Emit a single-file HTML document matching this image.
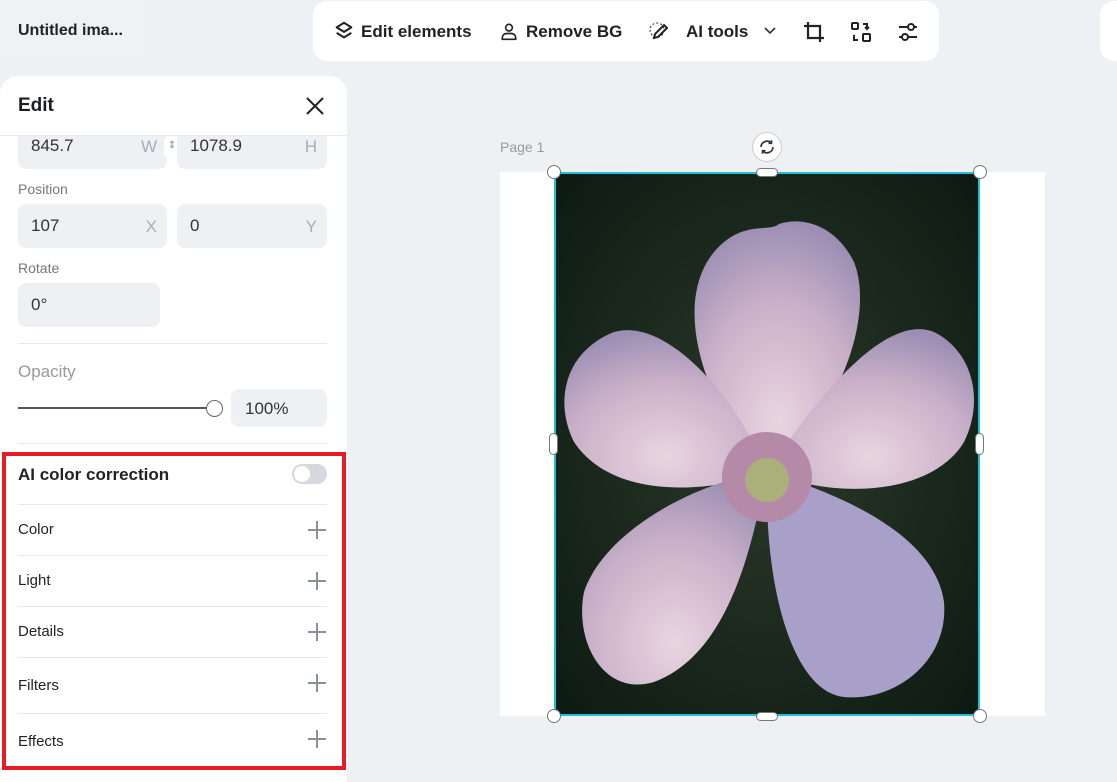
<!DOCTYPE html>
<html><head><meta charset="utf-8"><style>
*{box-sizing:border-box;margin:0;padding:0}
body{width:1117px;height:782px;background:#eef1f4;font-family:"Liberation Sans",sans-serif;position:relative;overflow:hidden;color:#1b1d22}
.abs{position:absolute}
.title{left:0;top:0;width:150px;height:60px;background:#eff2f5;border-radius:0 0 14px 0;font-size:16px;font-weight:bold;padding:22px 18px;color:#222;white-space:nowrap}
.tb{left:313px;top:1px;width:626px;height:60px;background:#fff;border-radius:14px}
.tb span{position:absolute;top:21px;font-size:17px;font-weight:bold;color:#222}
.panel{left:0;top:76px;width:347px;height:706px;background:#fff;border-radius:18px 18px 0 0}
.inp{position:absolute;background:#eef1f4;border-radius:8px;height:44px;font-size:17px;padding:12px 13px;color:#333}
.inp i{position:absolute;right:10px;top:13px;font-style:normal;color:#a4adb8}
.lbl{position:absolute;left:18px;font-size:14px;color:#777}
.hr{position:absolute;left:18px;width:309px;height:1px;background:#e6e8eb}
.row{position:absolute;left:18px;font-size:15px;color:#222}
.plus{position:absolute;left:308px;width:18px;height:18px}
.plus:before{content:"";position:absolute;left:8px;top:0;width:1.5px;height:18px;background:#8a919a}
.plus:after{content:"";position:absolute;left:0;top:8px;width:18px;height:1.5px;background:#8a919a}
.h{position:absolute;width:14px;height:14px;border-radius:50%;background:#fff;border:1.5px solid #777}
</style></head><body>
<div class="abs title">Untitled ima...</div>
<div class="abs tb">
<svg class="abs" style="left:20px;top:19px" width="22" height="22" viewBox="0 0 24 24" fill="none" stroke="#222" stroke-width="2.2" stroke-linejoin="round"><path d="M12 3l8 5-8 5-8-5z"/><path d="M4 14l8 5 8-5"/></svg>
<span style="left:48px">Edit elements</span>
<svg class="abs" style="left:186px;top:20px" width="20" height="20" viewBox="0 0 24 24" fill="none" stroke="#222" stroke-width="2"><circle cx="12" cy="8" r="4"/><path d="M4 22v-2a5 5 0 0 1 5-5h6a5 5 0 0 1 5 5v2z"/></svg>
<span style="left:213px">Remove BG</span>
<svg class="abs" style="left:334px;top:19px" width="24" height="24" viewBox="0 0 24 24" fill="none" stroke="#222" stroke-width="2"><path d="M17 5l3 3-9 9-4 1 1-4z"/><circle cx="10" cy="10" r="7" stroke-dasharray="2 2" stroke-width="1"/></svg>
<span style="left:373px">AI tools</span>
<svg class="abs" style="left:450px;top:25px" width="14" height="10" viewBox="0 0 14 10" fill="none" stroke="#333" stroke-width="1.6"><path d="M2 2l5 5 5-5"/></svg>
<svg class="abs" style="left:489px;top:19px" width="24" height="24" viewBox="0 0 24 24" fill="none" stroke="#222" stroke-width="2.2"><path d="M6 2v16h16M2 6h16v16"/></svg>
<svg class="abs" style="left:536px;top:19px" width="24" height="24" viewBox="0 0 24 24" fill="none" stroke="#222" stroke-width="2"><rect x="3" y="3" width="6" height="6" rx="1"/><rect x="14" y="14" width="7" height="7" rx="1"/><path d="M14 4h4v5M16 7l2 2 2-2M9 20H5v-5"/></svg>
<svg class="abs" style="left:583px;top:19px" width="24" height="24" viewBox="0 0 24 24" fill="none" stroke="#222" stroke-width="2"><path d="M3 7h9M18 7h3M3 17h3M12 17h9"/><circle cx="15" cy="7" r="3"/><circle cx="9" cy="17" r="3"/></svg>
</div>
<div class="abs" style="left:1100px;top:1px;width:30px;height:60px;background:#fff;border-radius:14px"></div>

<div class="abs panel">
<div class="inp" style="left:18px;top:60px;width:149px;height:33px;border-radius:0 0 8px 8px;padding-top:0">845.7<i style="top:1px">W</i></div>
<div class="abs" style="left:164px;top:61px;width:16px;height:20px;background:#fff;border-radius:4px;font-size:10px;text-align:center;color:#888;padding-top:3px">⇕</div>
<div class="inp" style="left:177px;top:60px;width:150px;height:33px;border-radius:0 0 8px 8px;padding-top:0">1078.9<i style="top:1px">H</i></div>
<div style="position:absolute;left:18px;top:19px;font-size:19px;font-weight:bold">Edit</div>
<svg style="position:absolute;left:305px;top:20px" width="20" height="20" viewBox="0 0 20 20" stroke="#222" stroke-width="2"><path d="M2 2l16 16M18 2L2 18"/></svg>
<div class="hr" style="left:0;width:347px;top:59px"></div>
<div class="lbl" style="top:105px">Position</div>
<div class="inp" style="left:18px;top:128px;width:149px">107<i>X</i></div>
<div class="inp" style="left:177px;top:128px;width:150px">0<i>Y</i></div>
<div class="lbl" style="top:184px">Rotate</div>
<div class="inp" style="left:18px;top:207px;width:142px">0°</div>
<div class="hr" style="top:267px"></div>
<div class="lbl" style="top:286px;font-size:17px;color:#999">Opacity</div>
<div class="abs" style="left:18px;top:331px;width:197px;height:2px;background:#555"></div>
<div class="abs" style="left:206px;top:324px;width:17px;height:17px;border-radius:50%;background:#fff;border:1px solid #666"></div>
<div class="inp" style="left:231px;top:313px;width:96px;height:38px;padding:10px 14px">100%</div>
<div class="hr" style="top:367px"></div>
</div>
<div class="abs" style="left:2px;top:452px;width:344px;height:318px;border:4px solid #e51c23"></div>
<div class="abs" style="left:18px;top:465px;font-size:17px;font-weight:bold;color:#222">AI color correction</div>
<div class="abs" style="left:292px;top:464px;width:35px;height:20px;border-radius:10px;background:#d5d9de"><div style="position:absolute;left:2px;top:2px;width:16px;height:16px;border-radius:50%;background:#fff"></div></div>
<div class="hr" style="top:504px"></div>
<div class="row" style="top:521px">Color</div><div class="plus" style="top:521px"></div>
<div class="hr" style="top:555px"></div>
<div class="row" style="top:572px">Light</div><div class="plus" style="top:572px"></div>
<div class="hr" style="top:606px"></div>
<div class="row" style="top:623px">Details</div><div class="plus" style="top:623px"></div>
<div class="hr" style="top:657px"></div>
<div class="row" style="top:677px">Filters</div><div class="plus" style="top:674px"></div>
<div class="hr" style="top:713px"></div>
<div class="row" style="top:733px">Effects</div><div class="plus" style="top:730px"></div>

<div class="abs" style="left:500px;top:139px;font-size:14px;color:#999">Page 1</div>
<div class="abs" style="left:500px;top:172px;width:545px;height:544px;background:#fff"></div>
<svg class="abs" style="left:554px;top:172px" width="426" height="544" viewBox="0 0 426 544">
<defs><radialGradient id="bg" cx="50%" cy="50%" r="70%"><stop offset="0" stop-color="#2c3a2a"/><stop offset="1" stop-color="#0d1a12"/></radialGradient>
<radialGradient id="pt" cx="50%" cy="80%" r="80%"><stop offset="0" stop-color="#e9d5e0"/><stop offset="0.6" stop-color="#c9b0c8"/><stop offset="1" stop-color="#9c8eb4"/></radialGradient></defs>
<rect width="426" height="544" fill="url(#bg)"/>
<g fill="url(#pt)">
<path d="M215 300 C150 240 110 120 170 70 C195 50 215 60 225 52 C245 45 280 50 300 90 C320 140 290 240 215 300Z"/>
<path d="M213 300 C160 320 60 330 20 270 C0 230 10 180 60 160 C110 145 180 220 213 300Z"/>
<path d="M213 300 C260 230 330 140 380 160 C420 180 430 230 410 270 C380 320 290 330 213 300Z"/>
<path d="M213 300 C200 360 180 480 100 510 C50 525 20 470 30 420 C50 360 140 310 213 300Z"/>
<path d="M213 300 C280 320 380 360 390 430 C395 490 340 530 290 525 C240 520 210 420 213 300Z" fill="#a8a0c8"/>
</g>
<circle cx="213" cy="305" r="45" fill="#b48aa8"/>
<circle cx="213" cy="308" r="22" fill="#a9b07a"/>
</svg>
<div class="abs" style="left:554px;top:172px;width:426px;height:544px;border:2px solid #1ec0d8"></div>
<div class="h" style="left:547px;top:165px"></div><div class="h" style="left:973px;top:165px"></div>
<div class="h" style="left:547px;top:709px"></div><div class="h" style="left:973px;top:709px"></div>
<div class="abs" style="left:756px;top:168px;width:22px;height:9px;border-radius:5px;background:#fff;border:1.5px solid #777"></div>
<div class="abs" style="left:756px;top:712px;width:22px;height:9px;border-radius:5px;background:#fff;border:1.5px solid #777"></div>
<div class="abs" style="left:549px;top:433px;width:9px;height:22px;border-radius:5px;background:#fff;border:1.5px solid #777"></div>
<div class="abs" style="left:975px;top:433px;width:9px;height:22px;border-radius:5px;background:#fff;border:1.5px solid #777"></div>
<div class="abs" style="left:752px;top:132px;width:30px;height:30px;border-radius:50%;background:#fff;border:1px solid #ccc"></div>
<svg class="abs" style="left:758px;top:138px" width="18" height="18" viewBox="0 0 24 24" fill="none" stroke="#333" stroke-width="2.2"><path d="M20 12a8 8 0 0 1-14 5M4 12a8 8 0 0 1 14-5"/><path d="M18 3v4h-4M6 21v-4h4"/></svg>
</body></html>
